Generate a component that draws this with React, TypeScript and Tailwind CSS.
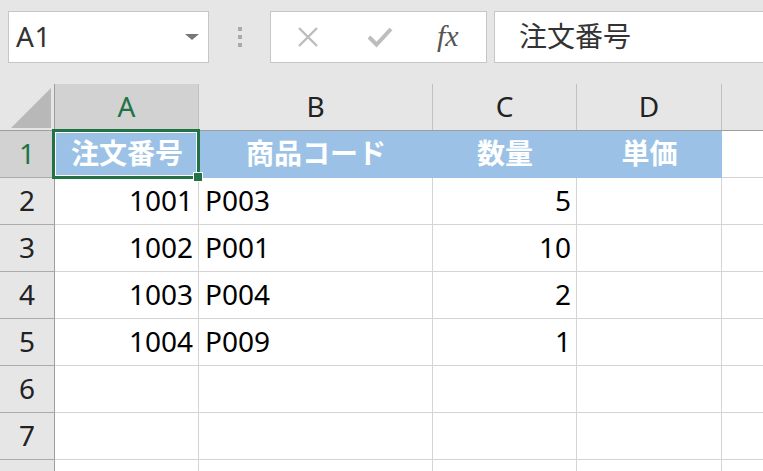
import React from "react";

const cols = ["A", "B", "C", "D"];
const widths = ["w-[144px]", "w-[234px]", "w-[144px]", "w-[145px]"];

type Row = { n: number; a?: string; b?: string; c?: string; hideNum?: boolean };
const rows: Row[] = [
  { n: 2, a: "1001", b: "P003", c: "5" },
  { n: 3, a: "1002", b: "P001", c: "10" },
  { n: 4, a: "1003", b: "P004", c: "2" },
  { n: 5, a: "1004", b: "P009", c: "1" },
  { n: 6 },
  { n: 7 },
  { n: 8, hideNum: true },
];

export default function App() {
  return (
    <div className="w-[763px] h-[471px] overflow-hidden bg-white font-['Noto_Sans','Noto_Sans_CJK_JP',sans-serif] text-black">
      {/* formula bar */}
      <div className="h-[84px] bg-[#e6e6e6] flex items-start pt-[11px] pl-[8px]">
        <div className="w-[201px] h-[52px] bg-white border border-[#c6c6c6] flex items-center pl-[7px] pr-[9px]">
          <span className="text-[28px] leading-none text-[#333] tracking-[0.5px] pb-[2px]">A1</span>
          <div className="ml-auto w-0 h-0 border-l-[7px] border-r-[7px] border-t-[6px] border-l-transparent border-r-transparent border-t-[#777]" />
        </div>
        <div className="w-[61px] h-[52px] flex flex-col items-center justify-center gap-[4px]">
          <div className="w-[4px] h-[4px] bg-[#aaa]" />
          <div className="w-[4px] h-[4px] bg-[#aaa]" />
          <div className="w-[4px] h-[4px] bg-[#aaa]" />
        </div>
        <div className="w-[217px] h-[52px] bg-white border border-[#c6c6c6] flex items-center">
          <svg className="ml-[26px]" width="22" height="22" viewBox="0 0 22 22">
            <path d="M2 2 L20 20 M20 2 L2 20" stroke="#bdbdbd" strokeWidth="2.4" fill="none" />
          </svg>
          <svg className="ml-[48px]" width="26" height="22" viewBox="0 0 26 22">
            <path d="M2 11 L9.5 18.5 L24 3" stroke="#bdbdbd" strokeWidth="4" fill="none" />
          </svg>
          <span className="ml-[44px] text-[30px] leading-none italic text-[#555] font-['Liberation_Serif',serif] pb-[2px]">
            fx
          </span>
        </div>
        <div className="ml-[7px] flex-1 h-[52px] bg-white border border-[#c6c6c6] border-r-0 flex items-center pl-[24px]">
          <span className="text-[28px] leading-none text-[#333] pb-[2px]">注文番号</span>
        </div>
      </div>

      {/* column header row */}
      <div className="flex h-[47px] bg-[#e6e6e6] border-b border-[#9e9e9e]">
        <div className="w-[55px] h-full border-r border-[#9e9e9e] flex items-end justify-end pr-[3px] pb-[2px]">
          <svg width="40" height="40" viewBox="0 0 40 40">
            <path d="M0 40 L40 0 L40 40 Z" fill="#b8b8b8" />
          </svg>
        </div>
        {cols.map((c, i) => (
          <div
            key={c}
            className={`${widths[i]} h-full border-r border-[#c0c0c0] flex items-center justify-center text-[28px] leading-none pb-[3px] ${
              i === 0 ? "bg-[#d2d2d2] text-[#217346]" : "text-[#222]"
            }`}
          >
            {c}
          </div>
        ))}
        <div className="flex-1 h-full" />
      </div>

      {/* row 1 */}
      <div className="flex h-[47px]">
        <div className="w-[55px] h-full bg-[#d2d2d2] border-r border-b border-r-[#9e9e9e] border-b-[#ababab] flex items-center justify-center text-[28px] leading-none text-[#217346] pb-[3px]">
          1
        </div>
        <div className="relative w-[144px] h-full bg-[#9bc2e6] flex items-center justify-center text-[28px] leading-none font-bold text-white pb-[3px]">
          注文番号
          <div className="absolute left-[-3px] top-[-2px] w-[148px] h-[50px] border-[3px] border-[#217346] shadow-[inset_0_0_0_1px_#ffffff]" />
          <div className="absolute left-[138px] top-[41px] w-[10px] h-[10px] bg-[#217346] border border-white" />
        </div>
        <div className="w-[234px] h-full bg-[#9bc2e6] flex items-center justify-center text-[28px] leading-none font-bold text-white pb-[3px]">
          商品コード
        </div>
        <div className="w-[144px] h-full bg-[#9bc2e6] flex items-center justify-center text-[28px] leading-none font-bold text-white pb-[3px]">
          数量
        </div>
        <div className="w-[145px] h-full bg-[#9bc2e6] flex items-center justify-center text-[28px] leading-none font-bold text-white pb-[3px]">
          単価
        </div>
        <div className="flex-1 h-full border-b border-[#d4d4d4]" />
      </div>

      {rows.map((r) => (
        <div key={r.n} className="flex h-[47px]">
          <div className="w-[55px] h-full bg-[#e6e6e6] border-r border-b border-r-[#9e9e9e] border-b-[#ababab] flex items-center justify-center text-[28px] leading-none text-[#222] pb-[3px]">
            {r.hideNum ? "" : r.n}
          </div>
          <div className="w-[144px] h-full border-r border-b border-[#d4d4d4] flex items-center justify-end pr-[5px] text-[28px] leading-none pb-[3px]">
            {r.a}
          </div>
          <div className="w-[234px] h-full border-r border-b border-[#d4d4d4] flex items-center pl-[6px] text-[28px] leading-none pb-[3px]">
            {r.b}
          </div>
          <div className="w-[144px] h-full border-r border-b border-[#d4d4d4] flex items-center justify-end pr-[5px] text-[28px] leading-none pb-[3px]">
            {r.c}
          </div>
          <div className="w-[145px] h-full border-r border-b border-[#d4d4d4]" />
          <div className="flex-1 h-full border-b border-[#d4d4d4]" />
        </div>
      ))}
    </div>
  );
}
